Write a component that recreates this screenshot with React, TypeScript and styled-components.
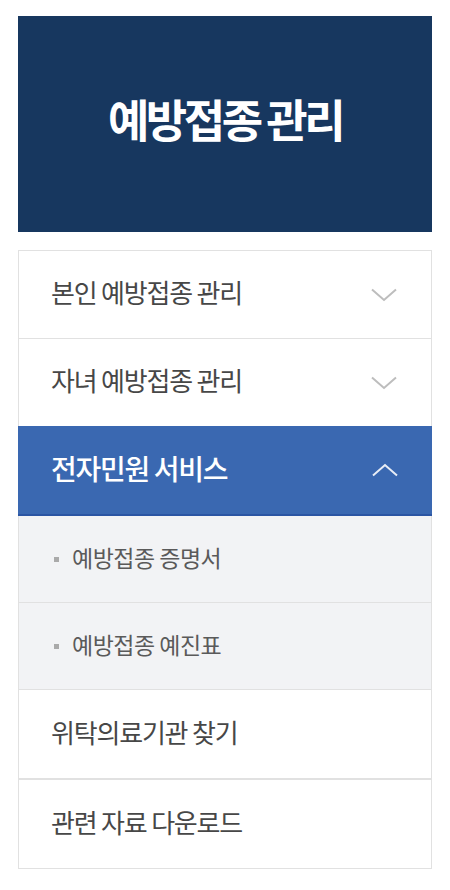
import React from "react";
import styled, { createGlobalStyle } from "styled-components";

const Global = createGlobalStyle`
  html, body { margin: 0; padding: 0; background: #fff; }
  body { font-family: "Noto Sans CJK KR", "Noto Sans", sans-serif; }
`;

const Page = styled.div`
  padding: 16px 18px;
  display: flex;
  flex-direction: column;
  gap: 18px;
`;

const Header = styled.div`
  height: 216px;
  background: #17375f;
  display: flex;
  align-items: center;
  justify-content: center;
`;

const Title = styled.h1`
  margin: 0;
  color: #fff;
  font-size: 45px;
  font-weight: 700;
  letter-spacing: -3.5px;
  line-height: 1;
  padding-bottom: 12px;
`;

const Menu = styled.ul`
  list-style: none;
  margin: 0;
  padding: 0;
  border: 1px solid #e1e1e1;
`;

const Item = styled.li<{ $active?: boolean; $thick?: boolean; $tall?: boolean }>`
  height: ${(p) => (p.$active || p.$tall ? 88 : 87)}px;
  display: flex;
  align-items: center;
  justify-content: space-between;
  padding: 0 34px 0 ${(p) => (p.$active ? 33 : 32)}px;
  background: ${(p) => (p.$active ? "#3a68b1" : "#fff")};
  border-bottom: ${(p) => (p.$active ? "2px solid #2b55a3" : "1px solid #e1e1e1")};
  margin: ${(p) => (p.$active ? "-1px -1px 0" : "0")};
  border-top: ${(p) => (p.$thick ? "1px solid #e1e1e1" : "none")};
  &:last-child { border-bottom: none; }
`;

const Label = styled.span<{ $active?: boolean }>`
  font-size: ${(p) => (p.$active ? 28 : 26)}px;
  font-weight: ${(p) => (p.$active ? 500 : 400)};
  letter-spacing: ${(p) => (p.$active ? -1.3 : -1.2)}px;
  color: ${(p) => (p.$active ? "#fff" : "#474747")};
  line-height: 1;
  padding-bottom: 5px;
`;

const SubList = styled.ul`
  list-style: none;
  margin: 0;
  padding: 0;
  background: #f2f3f5;
`;

const SubItem = styled.li`
  height: 86px;
  display: flex;
  align-items: center;
  gap: 13px;
  padding-left: 35px;
  border-bottom: 1px solid #e1e1e1;
`;

const Bullet = styled.span`
  width: 5px;
  height: 5px;
  background: #aaaaaa;
  margin-top: 1px;
`;

const SubLabel = styled.span`
  font-size: 23px;
  letter-spacing: -0.5px;
  color: #5a5a5a;
  line-height: 1;
  padding-bottom: 3px;
`;

const Chevron = ({ up, color }: { up?: boolean; color: string }) => (
  <svg width="26" height="14" viewBox="0 0 26 14">
    <polyline
      points={up ? "1,12.5 13,2 25,12.5" : "1,1.5 13,12 25,1.5"}
      fill="none"
      stroke={color}
      strokeWidth="2"
    />
  </svg>
);

export default function App() {
  return (
    <>
      <Global />
      <Page>
        <Header>
          <Title>예방접종 관리</Title>
        </Header>
        <Menu>
          <Item>
            <Label>본인 예방접종 관리</Label>
            <Chevron color="#bdbdbd" />
          </Item>
          <Item>
            <Label>자녀 예방접종 관리</Label>
            <Chevron color="#bdbdbd" />
          </Item>
          <Item $active>
            <Label $active>전자민원 서비스</Label>
            <Chevron up color="#e8edf6" />
          </Item>
          <SubList>
            <SubItem>
              <Bullet />
              <SubLabel>예방접종 증명서</SubLabel>
            </SubItem>
            <SubItem>
              <Bullet />
              <SubLabel>예방접종 예진표</SubLabel>
            </SubItem>
          </SubList>
          <Item $tall>
            <Label>위탁의료기관 찾기</Label>
          </Item>
          <Item $thick $tall>
            <Label>관련 자료 다운로드</Label>
          </Item>
        </Menu>
      </Page>
    </>
  );
}
